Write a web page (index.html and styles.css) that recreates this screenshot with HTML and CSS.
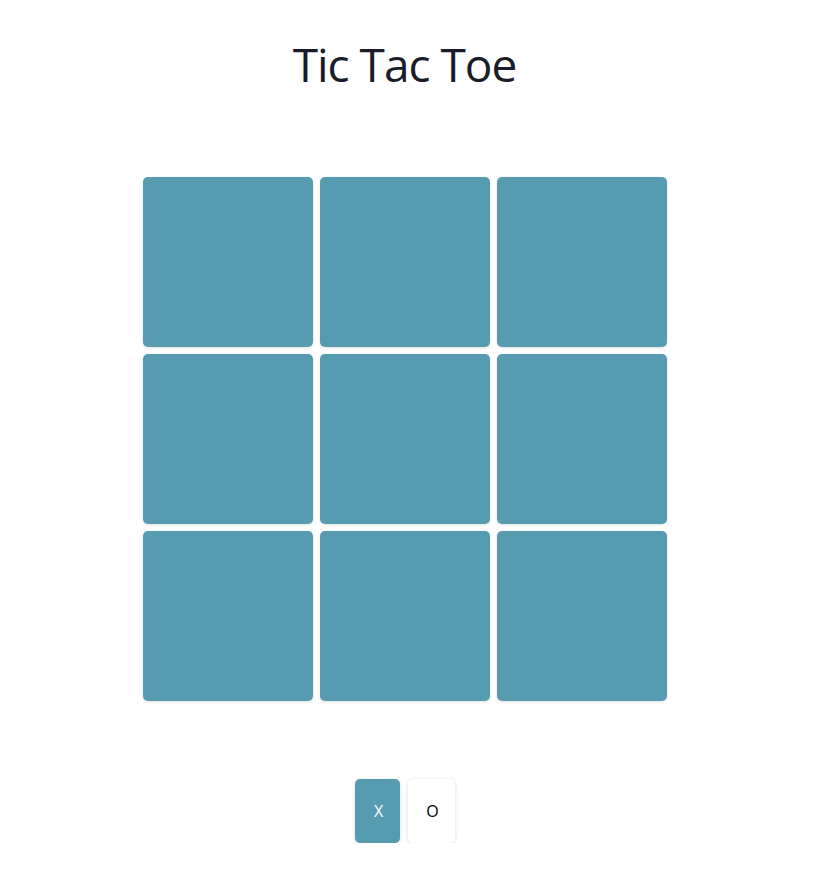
FILE: index.html
```html
<!DOCTYPE html>
<html lang="en">
<head>
<meta charset="utf-8">
<title>Tic Tac Toe</title>
<link rel="stylesheet" href="styles.css">
</head>
<body>
<main class="app">
  <h1 class="title">Tic Tac Toe</h1>
  <div class="board">
    <div class="cell"></div><div class="cell"></div><div class="cell"></div>
    <div class="cell"></div><div class="cell"></div><div class="cell"></div>
    <div class="cell"></div><div class="cell"></div><div class="cell"></div>
  </div>
  <div class="players">
    <button class="player active">X</button>
    <button class="player">O</button>
  </div>
</main>
</body>
</html>
```
FILE: styles.css
```css
html, body {
  margin: 0;
  padding: 0;
  background: #ffffff;
}
body {
  font-family: "Open Sans", "Noto Sans", sans-serif;
  color: #1a1d29;
  padding-right: 15px;
}
.app {
  display: flex;
  flex-direction: column;
  align-items: center;
}
.title {
  margin: 34px 0 0;
  font-size: 46px;
  font-weight: 400;
  line-height: 60px;
  letter-spacing: -1px;
}
.board {
  margin-top: 83px;
  display: grid;
  grid-template-columns: repeat(3, 170px);
  grid-template-rows: repeat(3, 170px);
  gap: 7px;
}
.cell {
  background: #579bb1;
  border-radius: 5px;
  box-shadow: 0 1px 3px rgba(0, 0, 0, 0.12);
}
.players {
  margin-top: 78px;
  display: flex;
  gap: 8px;
}
.player {
  height: 64px;
  padding: 0;
  padding-left: 3px;
  border: none;
  border-radius: 5px;
  background: #ffffff;
  color: #000000;
  font-family: "Open Sans", "Noto Sans", sans-serif;
  font-size: 16px;
  box-shadow: 0 1px 4px rgba(0, 0, 0, 0.15);
}
.player.active {
  background: #579bb1;
  color: #ffffff;
  width: 45px;
}
.player:not(.active) {
  width: 47px;
}
```
